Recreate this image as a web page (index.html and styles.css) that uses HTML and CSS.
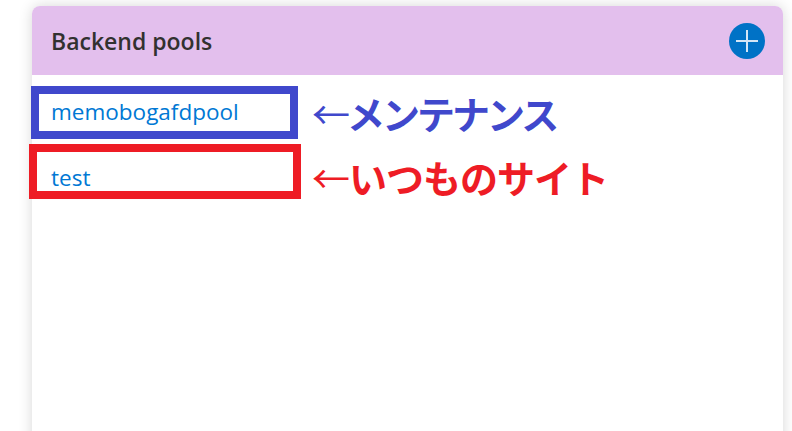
FILE: index.html
```html
<!DOCTYPE html>
<html lang="ja">
<head>
  <meta charset="UTF-8" />
  <meta name="viewport" content="width=device-width, initial-scale=1" />
  <title>Backend pools</title>
  <link rel="stylesheet" href="styles.css">
</head>
<body>
  <main class="pool-card">
    <header class="pool-header">
      <h2>Backend pools</h2>
      <button class="add-button" title="Add">
        <svg width="36" height="36" viewBox="0 0 36 36">
          <circle cx="18" cy="18" r="18" fill="#0072c6" />
          <path d="M7 18h22M18 7v22" stroke="#d4e6f6" stroke-width="2" fill="none" />
        </svg>
      </button>
    </header>

    <ul class="pool-list">
      <li class="pool-row">
        <a class="pool-item mark-blue" href="#">memobogafdpool</a>
        <span class="note note-blue"><span class="arrow">←</span>メンテナンス</span>
      </li>
      <li class="pool-row">
        <a class="pool-item mark-red" href="#">test</a>
        <span class="note note-red"><span class="arrow">←</span>いつものサイト</span>
      </li>
    </ul>
  </main>
</body>
</html>
```

FILE: styles.css
```css
* {
  margin: 0;
  padding: 0;
  box-sizing: border-box;
}

body {
  font-family: 'Segoe UI', 'Open Sans', sans-serif;
  background: #fff;
  padding: 6px 9px 0 32px;
  height: 431px;
  overflow: hidden;
}

.pool-card {
  background-color: #fff;
  border-radius: 8px 8px 0 0;
  box-shadow: 0 0 14px rgba(0, 0, 0, 0.16);
  height: 440px;
}

.pool-header {
  background-color: #e3bfed;
  border-radius: 8px 8px 0 0;
  height: 69px;
  padding: 0 18px 0 19px;
  display: flex;
  align-items: center;
  justify-content: space-between;
}

.pool-header h2 {
  font-size: 23px;
  font-weight: 600;
  color: #323130;
}

.add-button {
  background: transparent;
  border: none;
  width: 36px;
  height: 36px;
  cursor: pointer;
  display: flex;
}

.pool-list {
  list-style: none;
  padding-top: 11px;
  display: flex;
  flex-direction: column;
  gap: 5px;
}

.pool-row {
  display: flex;
  align-items: center;
}

.pool-item {
  display: block;
  color: #0078d4;
  text-decoration: none;
  font-size: 22.5px;
  border: 8px solid;
}

.mark-blue {
  border-color: #4048cc;
  width: 267px;
  height: 53px;
  margin-left: -1px;
  padding-left: 12px;
  line-height: 35px;
}

.mark-red {
  border-color: #ee1c25;
  width: 272px;
  height: 55px;
  margin-left: -3px;
  padding: 8px 0 0 14px;
  line-height: 35px;
}

.note {
  font-family: 'Noto Sans CJK JP', sans-serif;
  font-weight: 700;
  font-size: 38px;
  line-height: 1;
}

.note .arrow {
  font-weight: 400;
}

.note-blue {
  color: #4048cc;
  margin-left: 14px;
  letter-spacing: -3px;
}

.note-red {
  color: #ee1c25;
  margin-left: 11px;
  padding-top: 10px;
  letter-spacing: -1px;
}
```
